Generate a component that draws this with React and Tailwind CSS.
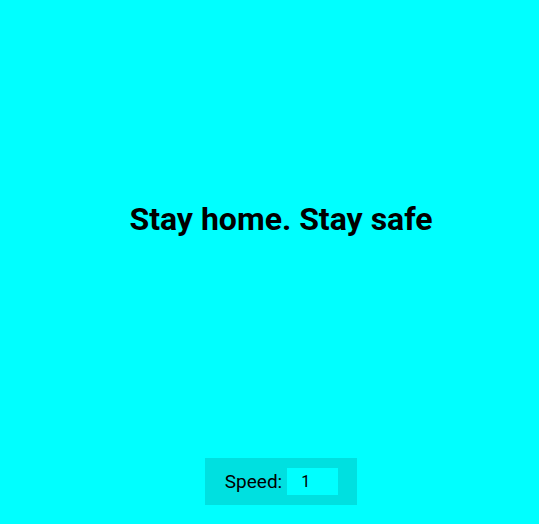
import React from 'react';

export default function App() {
  return (
    <div className="h-[524px] w-[539px] bg-[#00ffff] flex flex-col pl-[23px] overflow-hidden" style={{ fontFamily: 'Roboto, sans-serif' }}>
      <div className="flex-1 flex items-center justify-center pb-[20px]">
        <h1 className="text-[32px] font-bold text-black">Stay home. Stay safe</h1>
      </div>
      <div className="flex justify-center mb-[19px]">
        <div className="bg-[#00e0e0] pl-5 pr-[19px] py-[10px] flex items-center gap-[5px] text-[19px] leading-[27px] text-black">
          <label htmlFor="speed">Speed:</label>
          <input
            id="speed"
            type="text"
            defaultValue="1"
            className="w-[51px] h-[27px] bg-[#00ffff] px-[14px] text-[16px] outline-none"
          />
        </div>
      </div>
    </div>
  );
}
